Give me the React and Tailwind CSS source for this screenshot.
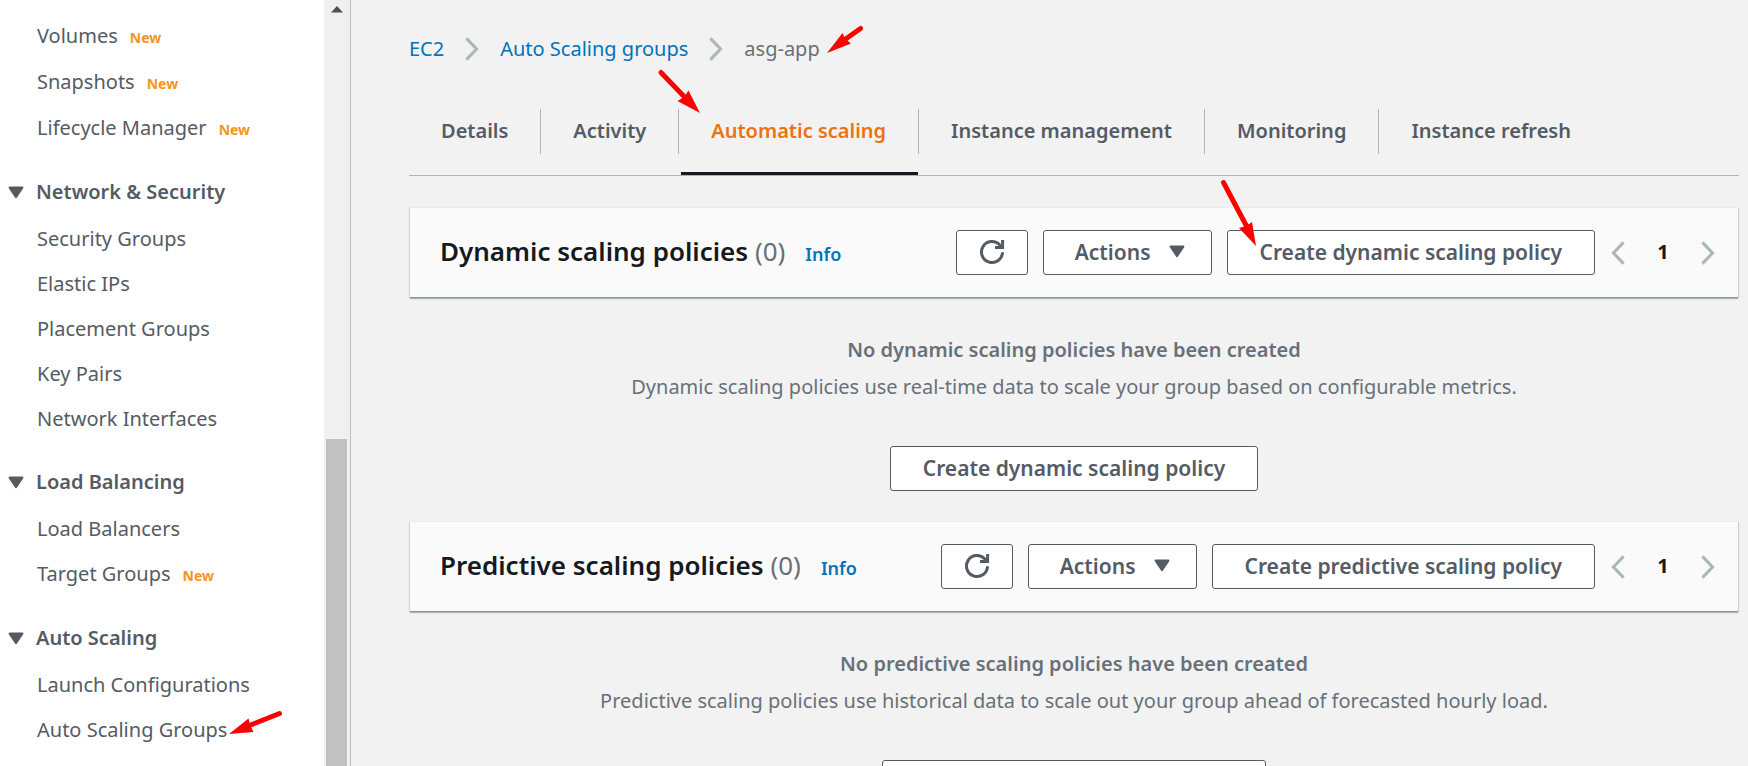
const navSections = [
  {
    items: [
      { label: "Volumes", isNew: true },
      { label: "Snapshots", isNew: true },
      { label: "Lifecycle Manager", isNew: true },
    ],
  },
  {
    title: "Network & Security",
    items: [
      { label: "Security Groups" },
      { label: "Elastic IPs" },
      { label: "Placement Groups" },
      { label: "Key Pairs" },
      { label: "Network Interfaces" },
    ],
  },
  {
    title: "Load Balancing",
    items: [{ label: "Load Balancers" }, { label: "Target Groups", isNew: true }],
  },
  {
    title: "Auto Scaling",
    items: [{ label: "Launch Configurations" }, { label: "Auto Scaling Groups" }],
  },
];

const tabs = [
  "Details",
  "Activity",
  "Automatic scaling",
  "Instance management",
  "Monitoring",
  "Instance refresh",
];

function Caret() {
  return (
    <svg viewBox="0 0 16 13" className="h-[13px] w-4 shrink-0" fill="#545b64" stroke="#545b64" strokeWidth="2" strokeLinejoin="round" aria-hidden="true">
      <path d="M1.6 1.6h12.8L8 11.2z" />
    </svg>
  );
}

function Chevron({ left = false }) {
  return (
    <svg viewBox="0 0 14 24" className="h-6 w-3.5 shrink-0" fill="none" stroke="#aab7b8" strokeWidth="3" aria-hidden="true">
      <path d={left ? "M12.6 1.4L2.4 12l10.2 10.6" : "M1.4 1.4L11.6 12 1.4 22.6"} />
    </svg>
  );
}

function Refresh() {
  return (
    <svg viewBox="0 0 26 26" className="size-[26px]" fill="none" stroke="#545b64" strokeWidth="3" aria-hidden="true">
      <path d="M23.5 13.2A10.5 10.5 0 1 1 20.6 5.8L22 7.6" />
      <path d="M23.6 1v7.6H16" />
    </svg>
  );
}

function Button({ children, className = "px-8", ...rest }) {
  return (
    <button
      type="button"
      className={`flex h-[45px] items-center justify-center rounded-[3px] border border-[#545b64] bg-white pb-0.5 text-[21px] font-semibold whitespace-nowrap text-[#545b64] ${className}`}
      {...rest}
    >
      {children}
    </button>
  );
}

function Sidebar() {
  return (
    <aside className="flex w-[351px] shrink-0 border-r border-[#b9bdc4] bg-white">
      <nav aria-label="EC2" className="min-w-0 flex-1 overflow-hidden pt-[13px]">
        {navSections.map((section, i) => (
          <section key={i} className={i ? "mt-[17px]" : ""}>
            {section.title && (
              <h2 className="text-xl font-semibold">
                <button type="button" className="flex h-12 w-full items-center gap-3 pl-2 text-left" aria-expanded="true">
                  <Caret />
                  {section.title}
                </button>
              </h2>
            )}
            <ul>
              {section.items.map((item) => (
                <li key={item.label} className={item.isNew ? "flex h-[46px] items-center pl-[37px]" : "flex h-[45px] items-center pl-[37px]"}>
                  <span className="flex items-baseline gap-3">
                    <a href="#">{item.label}</a>
                    {item.isNew && <span className="text-sm font-bold text-[#f7931e]">New</span>}
                  </span>
                </li>
              ))}
            </ul>
          </section>
        ))}
      </nav>
      <div className="flex w-[26px] flex-col items-center border-r border-[#f0f0f0] bg-[#f0f0f0]" aria-hidden="true">
        <svg viewBox="0 0 12 7" className="mt-1.5 h-[7px] w-3 shrink-0" fill="#505050">
          <path d="M0 6.5L6 0l6 6.5z" />
        </svg>
        <div className="mt-[426px] w-[21px] flex-1 bg-[#c1c1c1]" />
      </div>
    </aside>
  );
}

function Breadcrumb() {
  return (
    <nav aria-label="Breadcrumb">
      <ol className="flex items-center gap-[21px]">
        <li><a href="#" className="text-[#0073bb]">EC2</a></li>
        <li className="flex"><Chevron /></li>
        <li><a href="#" className="text-[#0073bb]">Auto Scaling groups</a></li>
        <li className="flex"><Chevron /></li>
        <li className="text-[#687078]">asg-app</li>
      </ol>
    </nav>
  );
}

function Tabs() {
  return (
    <div role="tablist" className="mt-8 flex h-[81px] border-b border-[#aab7b8]">
      {tabs.map((tab, i) => {
        const active = tab === "Automatic scaling";
        return (
          <div key={tab} className="relative flex items-start pt-[14px]">
            <button
              type="button"
              role="tab"
              aria-selected={active}
              className={`flex h-[45px] items-center border-[#aab7b8] px-8 pb-0.5 font-semibold whitespace-nowrap ${i < tabs.length - 1 ? "border-r" : ""} ${active ? "text-[#ec7211]" : ""}`}
            >
              {tab}
            </button>
            {active && <span className="absolute right-px bottom-0 left-0.5 h-[3px] bg-[#16191f]" />}
          </div>
        );
      })}
    </div>
  );
}

function Policies({ title, action, emptyTitle, emptyText }) {
  return (
    <section>
      <header className="mx-px flex h-[90px] items-center border-t border-[#eaeded] bg-[#fafafa] pr-[23px] pl-[30px] shadow-[0_1px_0_0_#879596,0_2px_1px_0_#aab7b8,1px_1px_1px_0_#cdd3d4,-1px_1px_1px_0_#d5dbdb]">
        <div className="flex items-baseline pb-0.5 whitespace-nowrap">
          <h2 className="text-[26px] leading-8 font-semibold text-[#16191f]">
            {title} <span className="font-normal text-[#687078]">(0)</span>
          </h2>
          <a href="#" className="ml-5 text-lg font-semibold text-[#0073bb]">Info</a>
        </div>
        <div className="ml-auto flex items-center gap-[15px]">
          <Button className="w-[72px]" aria-label="Refresh"><Refresh /></Button>
          <Button className="gap-[18px] pr-[26px] pl-[31px]" aria-haspopup="menu">Actions<Caret /></Button>
          <Button>{action}</Button>
        </div>
        <div className="ml-4 flex w-[104px] items-center justify-between">
          <button type="button" aria-label="Previous page" className="flex"><Chevron left /></button>
          <span className="pb-0.5 font-bold text-[#16191f]">1</span>
          <button type="button" aria-label="Next page" className="flex"><Chevron /></button>
        </div>
      </header>
      <div className="flex flex-col items-center pt-[34px] pb-[30px] text-[#687078]">
        <p className="leading-[37px] font-semibold">{emptyTitle}</p>
        <p className="leading-[37px]">{emptyText}</p>
        <div className="mt-[41px]">
          <Button>{action}</Button>
        </div>
      </div>
    </section>
  );
}

function Annotations() {
  return (
    <svg className="pointer-events-none absolute inset-0 h-full w-full" fill="#ff0000" stroke="#ff0000" aria-hidden="true">
      <g strokeWidth="5" strokeLinecap="round">
        <path d="M860.5 28.5L845 39.5" />
        <path d="M661 72.5L685 97.5" />
        <path d="M1223.5 182.5L1247 227" />
        <path d="M279.5 713.5L248 726" />
      </g>
      <g stroke="none">
        <path d="M827 53L842.5 33L845 38.5L851 43.5z" />
        <path d="M700 113L677.5 101L684 97L688.5 90.5z" />
        <path d="M1256 246L1239 228L1246 226L1252 222z" />
        <path d="M229 734L248.5 718.5L250 725L253.5 732z" />
      </g>
    </svg>
  );
}

export default function App() {
  return (
    <div className="relative flex h-screen overflow-hidden bg-[#f2f2f2] font-['Noto_Sans',sans-serif] text-xl leading-7 text-[#545b64]">
      <Sidebar />
      <main className="min-w-0 flex-1 pt-[35px] pr-[9px] pl-[58px]">
        <Breadcrumb />
        <Tabs />
        <div className="mt-[31px]">
          <Policies
            title="Dynamic scaling policies"
            action="Create dynamic scaling policy"
            emptyTitle="No dynamic scaling policies have been created"
            emptyText="Dynamic scaling policies use real-time data to scale your group based on configurable metrics."
          />
          <Policies
            title="Predictive scaling policies"
            action="Create predictive scaling policy"
            emptyTitle="No predictive scaling policies have been created"
            emptyText="Predictive scaling policies use historical data to scale out your group ahead of forecasted hourly load."
          />
        </div>
      </main>
      <Annotations />
    </div>
  );
}
